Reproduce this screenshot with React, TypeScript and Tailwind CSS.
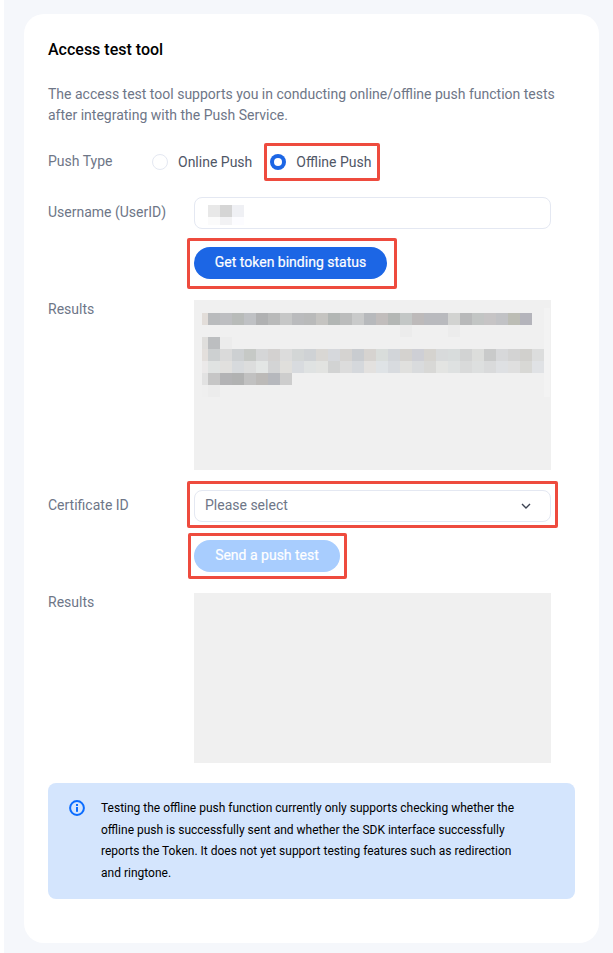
const font = "font-['Roboto',sans-serif]";

// mosaic blocks that hide the user's data in the screenshot
const resultRows = [
  ['#e2ddd9', '#b9bbbd', '#bdbec1', '#b8bbb9', '#bfc1c4', '#b0b1b2', '#b9baba', '#c6c7c7', '#babbbd', '#b9baba', '#c5c4c1', '#b2b6b4', '#bbbcbc', '#c9caca', '#b7b9bc', '#c1bdbc', '#b4b7b5', '#c3c7c6', '#bdbaba', '#b9babe', '#b9babe', '#d2d3d1', '#b8b9ba', '#c2c5c4', '#c6c4c5', '#c1c2c5', '#bcbdb5', '#b4b4bb'],
  ['#f0f0f0', '#f0f0f0', '#f0f0f0', '#f0f0f0', '#f0f0f0', '#f0f0f0', '#f0f0f0', '#f0f0f0', '#f0f0f0', '#f0f0f0', '#f0f0f0', '#f0f0f0', '#f0f0f0', '#f0f0f0', '#f0f0f0', '#f0f0f0', '#f0f0f0', '#ececec', '#f0f0f0', '#f0f0f0', '#f0f0f0', '#ececec'],
  ['#dfdedc', '#bcbec0', '#ececec'],
  ['#e3dfdc', '#cdd0d1', '#dadada', '#cdd0d2', '#c6c9c6', '#d5d6d7', '#d3d1d0', '#dcdcdc', '#d3d6d6', '#cfd2d5', '#d9d7d4', '#d6d8dc', '#d5d3d1', '#c9ccd0', '#d6d3d0', '#d9dddb', '#d2d5d9', '#d4d2cf', '#cecfd5', '#d5d3cf', '#d8dadb', '#d8dcdc', '#d2d3d3', '#dcdddb', '#c9caca', '#d7d8da', '#d3d3d3', '#d1d0cd', '#dcdddd'],
  ['#ebe9e9', '#e0e3e2', '#e1e0de', '#d7dadd', '#dcdddd', '#e3e6e5', '#d3d4d5', '#e0dfdc', '#d8dbdf', '#dfe2e2', '#e2e3e1', '#d2d3d3', '#dcdcdc', '#d5d8dc', '#e3e1df', '#dfe3e6', '#d8dbdf', '#e0e0de', '#d9dbdd', '#d8d8d6', '#e3e4e2', '#dee1e1', '#d9dada', '#dddfdf', '#d9dadb', '#dee0e3', '#dfdfdf', '#d8d8d5', '#e0e2e5'],
  ['#e2e2e2', '#c6c6c6', '#b3b3b5', '#b1b2b2', '#c1c1c1', '#bcbab8', '#b6b8bd', '#cdcdcd'],
  ['#efefef', '#ececec'],
];

const Mosaic = ({ rows }: { rows: string[][] }) => (
  <div className="flex flex-col">
    {rows.map((row, i) => (
      <div key={i} className="flex h-3">
        {row.map((color, j) => (
          <div key={j} className={j === 0 ? 'h-3 w-[6px]' : 'h-3 w-3'} style={{ backgroundColor: color }} />
        ))}
      </div>
    ))}
  </div>
);

const RedBox = ({ className }: { className: string }) => (
  <div className={`pointer-events-none absolute rounded-[2px] border-[3px] border-[#ee4b3e] ${className}`} />
);

const Label = ({ children }: { children: React.ReactNode }) => (
  <div className="w-[146px] shrink-0 text-sm leading-[21px] text-[#6e7687]">{children}</div>
);

const App = () => {
  return (
    <div className={`min-h-[953px] bg-white pl-1 ${font}`}>
      <div className="h-[953px] bg-[#f5f7fb] pl-5 pr-[14px] pt-[14px]">
        <div className="h-[929px] rounded-[20px] bg-white px-6 pt-[25px]">
          <h1 className="text-base font-medium leading-[21px] text-black">Access test tool</h1>
          <p className="mt-[24px] text-sm leading-[21px] text-[#6e7687]">
            The access test tool supports you in conducting online/offline push function tests after integrating with the Push Service.
          </p>

          {/* Push type */}
          <div className="mt-[25px] flex h-[21px] items-center">
            <div className="w-[104px] shrink-0 text-sm leading-[21px] text-[#6e7687]">Push Type</div>
            <div className="flex items-center">
              <span className="h-4 w-4 rounded-full border border-[#e4e8f2] bg-white" />
              <span className="ml-[10px] text-sm text-[#4f5666]">Online Push</span>
            </div>
            <div className="relative ml-[18px] flex items-center">
              <span className="flex h-4 w-4 items-center justify-center rounded-full bg-[#1c66e5]">
                <span className="h-2 w-2 rounded-full bg-white" />
              </span>
              <span className="ml-[10px] text-sm text-[#4f5666]">Offline Push</span>
              <RedBox className="-left-[6px] -right-[9px] -top-[9px] -bottom-[9px]" />
            </div>
          </div>

          {/* Username */}
          <div className="mt-[25px] flex">
            <div className="pt-[5px]">
              <Label>Username (UserID)</Label>
            </div>
            <div className="relative flex h-8 w-[357px] rounded-lg border border-[#e4e8f2] bg-white">
              <div className="absolute left-[13px] top-[7px]">
                <div className="flex h-3">
                  <div className="h-3 w-3 bg-[#e8e8e8]" />
                  <div className="h-3 w-3 bg-[#d5d5d5]" />
                  <div className="h-3 w-3 bg-[#eff0f4]" />
                </div>
                <div className="flex h-2">
                  <div className="h-2 w-3 bg-[#fbfbfb]" />
                  <div className="h-2 w-3 bg-[#f2f2f4]" />
                  <div className="h-2 w-3 bg-[#fcfcff]" />
                </div>
              </div>
            </div>
          </div>

          <div className="ml-[146px] mt-[18px]">
            <div className="relative w-fit">
              <button className="block h-8 w-[193px] rounded-full bg-[#1c66e5] pb-[2px] text-sm text-white [-webkit-text-stroke:0.2px_white]">
                Get token binding status
              </button>
              <RedBox className="-left-[7px] -right-[10px] -top-[9px] -bottom-[10px]" />
            </div>
          </div>

          {/* First results */}
          <div className="mt-[21px] flex">
            <div className="-mt-px">
              <Label>Results</Label>
            </div>
            <div className="relative h-[170px] w-[357px] bg-[#f0f0f0] pl-2 pt-[13px]">
              <Mosaic rows={resultRows} />
              <div className="absolute right-px top-2 h-[89px] w-[6px] bg-[#f3f3f3]" />
            </div>
          </div>

          {/* Certificate */}
          <div className="mt-5 flex">
            <div className="pt-[5px]">
              <Label>Certificate ID</Label>
            </div>
            <div className="relative h-8 w-[357px]">
              <div className="flex h-8 items-center justify-between rounded-lg border border-[#e4e8f2] bg-white pb-[2px] pl-[10px] pr-[18px] text-sm text-[#6e7687]">
                <span>Please select</span>
                <svg className="mt-[2px]" width="12" height="12" viewBox="0 0 12 12" fill="none" stroke="#3d4352" strokeWidth="1.4">
                  <path d="M2 4l4 4 4-4" />
                </svg>
              </div>
              <RedBox className="-left-[7px] -right-[7px] -top-[9px] -bottom-[6px]" />
            </div>
          </div>

          <div className="ml-[146px] mt-[18px]">
            <div className="relative w-fit">
              <button className="block h-8 w-[146px] rounded-full bg-[#a8cdfe] pb-[2px] text-sm text-white [-webkit-text-stroke:0.2px_white]">
                Send a push test
              </button>
              <RedBox className="-left-[6px] -right-[7px] -top-[7px] -bottom-[7px]" />
            </div>
          </div>

          {/* Second results */}
          <div className="mt-[21px] flex">
            <div className="-mt-px">
              <Label>Results</Label>
            </div>
            <div className="h-[170px] w-[357px] bg-[#f0f0f0]" />
          </div>

          {/* Notice */}
          <div className="mt-5 flex h-[116px] w-[527px] rounded-lg bg-[#d4e5fd] pl-[21px] pt-[15px]">
            <svg className="mt-[2px] shrink-0" width="16" height="16" viewBox="0 0 16 16" fill="none">
              <circle cx="8" cy="8" r="6.9" stroke="#0a6cff" strokeWidth="2" />
              <rect x="7" y="7" width="2" height="4.8" fill="#0a6cff" />
              <rect x="7" y="4" width="2" height="2" fill="#0a6cff" />
            </svg>
            <p className="ml-4 w-[430px] text-xs leading-[21.5px] text-black">
              Testing the offline push function currently only supports checking whether the offline push is successfully sent and whether the SDK interface successfully reports the Token. It does not yet support testing features such as redirection and ringtone.
            </p>
          </div>
        </div>
      </div>
    </div>
  );
};

export default App;
